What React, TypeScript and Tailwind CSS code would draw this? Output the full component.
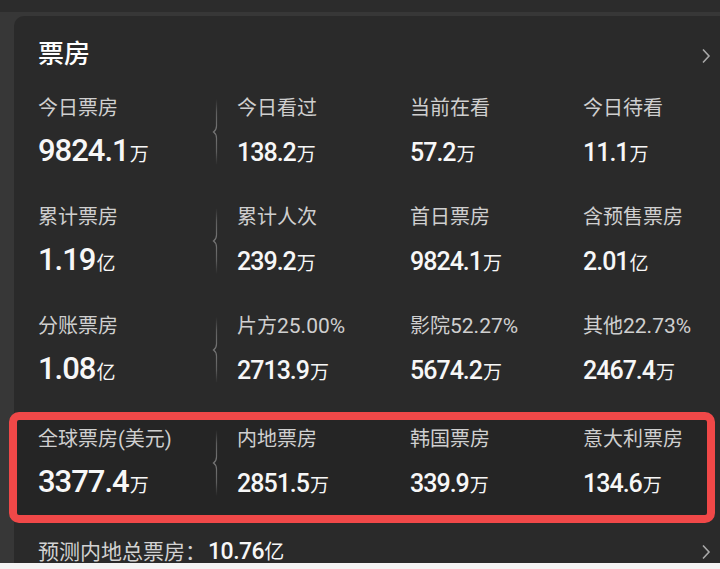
import React from "react";

type Cell = [string, string, string];

const rows: Cell[][] = [
  [
    ["今日票房", "9824.1", "万"],
    ["今日看过", "138.2", "万"],
    ["当前在看", "57.2", "万"],
    ["今日待看", "11.1", "万"],
  ],
  [
    ["累计票房", "1.19", "亿"],
    ["累计人次", "239.2", "万"],
    ["首日票房", "9824.1", "万"],
    ["含预售票房", "2.01", "亿"],
  ],
  [
    ["分账票房", "1.08", "亿"],
    ["片方25.00%", "2713.9", "万"],
    ["影院52.27%", "5674.2", "万"],
    ["其他22.73%", "2467.4", "万"],
  ],
];

const highlight: Cell[] = [
  ["全球票房(美元)", "3377.4", "万"],
  ["内地票房", "2851.5", "万"],
  ["韩国票房", "339.9", "万"],
  ["意大利票房", "134.6", "万"],
];

const FONT = "font-['Roboto','Noto_Sans_CJK_SC',sans-serif]";

function Divider() {
  return (
    <svg width="10" height="66" viewBox="0 0 10 66" className="block">
      <defs>
        <linearGradient id="dg" x1="0" y1="0" x2="0" y2="1">
          <stop offset="0" stopColor="#5a5a5a" stopOpacity="0" />
          <stop offset="0.2" stopColor="#5e5e5e" />
          <stop offset="0.5" stopColor="#777" />
          <stop offset="0.8" stopColor="#5e5e5e" />
          <stop offset="1" stopColor="#5a5a5a" stopOpacity="0" />
        </linearGradient>
      </defs>
      <path
        d="M6.5 0 L6.5 27 Q6.5 31 3.5 33 Q6.5 35 6.5 39 L6.5 66"
        fill="none"
        stroke="url(#dg)"
        strokeWidth="1.2"
      />
    </svg>
  );
}

const colStart = ["col-start-1", "col-start-3", "col-start-4", "col-start-5"];

function Label({ text }: { text: string }) {
  const m = text.match(/^([^0-9]+)([0-9.%]+)$/);
  if (!m) return <>{text}</>;
  return (
    <>
      {m[1]}
      <span className="text-[21px]">{m[2]}</span>
    </>
  );
}

function Block({ cells }: { cells: Cell[] }) {
  return (
    <div className="grid grid-cols-[172px_27px_173px_173px_1fr] grid-rows-[20px_auto] items-baseline gap-y-[17px]">
      {cells.map((c, i) => (
        <div
          key={"l" + i}
          className={`${colStart[i]} row-start-1 text-[20px] leading-[20px] text-[#cfcfcf] whitespace-nowrap`}
        >
          <Label text={c[0]} />
        </div>
      ))}
      <div className="col-start-2 row-start-1 row-span-2 self-center">
        <Divider />
      </div>
      {cells.map((c, i) => (
        <div
          key={"v" + i}
          className={`${colStart[i]} row-start-2 flex items-baseline whitespace-nowrap text-[#f7f7f7]`}
        >
          <span
            className={
              i === 0
                ? "text-[31px] leading-none font-medium tracking-[-1px]"
                : "text-[25px] leading-none font-medium tracking-[-1px]"
            }
          >
            {c[1]}
          </span>
          <span className="text-[19px] leading-none ml-[1px]">{c[2]}</span>
        </div>
      ))}
    </div>
  );
}

function Chevron() {
  return (
    <svg width="10" height="16" viewBox="0 0 10 16" className="block">
      <path d="M2 1.5 L8 8 L2 14.5" fill="none" stroke="#a8a8a8" strokeWidth="1.6" />
    </svg>
  );
}

export default function App() {
  return (
    <div className={`w-[720px] h-[569px] bg-[#f4f4f4] overflow-hidden ${FONT}`}>
      <div className="h-[563px] bg-[#373737] flex flex-col">
        <div className="h-[12px] bg-[#2c2c2c] shrink-0" />
        <div className="h-[4px] shrink-0" />
        <div className="flex-1 ml-[14px] bg-[#2a2a2a] rounded-tl-[10px] flex flex-col pt-[25px]">
          <div className="flex items-center justify-between pl-[24px] pr-[9px]">
            <div className="text-[26px] leading-[26px] text-white font-medium">票房</div>
            <div className="mt-[4px]">
              <Chevron />
            </div>
          </div>
          <div className="flex flex-col gap-[41px] pl-[24px] mt-[31px]">
            {rows.map((r, i) => (
              <Block key={i} cells={r} />
            ))}
          </div>
          <div className="mt-[28px] -ml-[5px] mr-[5px] border-[8px] border-[#f04848] rounded-[10px] bg-[#252525] pl-[21px] pt-[9px] pb-[18px]">
            <Block cells={highlight} />
          </div>
          <div className="flex items-center justify-between pl-[24px] pr-[9px] mt-[17px]">
            <div className="flex items-baseline whitespace-nowrap">
              <span className="text-[21px] leading-[22px] text-[#d2d2d2]">预测内地总票房：</span>
              <span className="text-[23px] leading-none text-[#f7f7f7] font-medium tracking-[-0.5px] ml-[2px]">10.76</span>
              <span className="text-[20px] leading-none text-[#f7f7f7]">亿</span>
            </div>
            <Chevron />
          </div>
        </div>
      </div>
    </div>
  );
}
